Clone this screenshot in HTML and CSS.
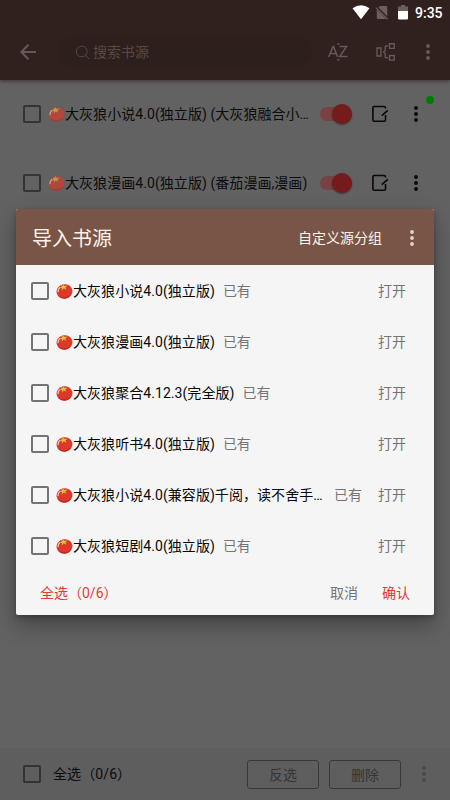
FILE: index.html
```html
<!DOCTYPE html>
<html lang="zh-CN">
<head>
<meta charset="utf-8">
<title>导入书源</title>
<link rel="stylesheet" href="styles.css">
</head>
<body>
<svg width="0" height="0" class="defs">
  <defs>
    <symbol id="tomato" viewBox="0 0 17 16">
      <ellipse cx="8.5" cy="8.4" rx="8" ry="7.2" fill="#dc392b" transform="rotate(-12 8.5 8.4)"/>
      <path d="M1.500 11C4 15 11 16 15.500 10.500C14 14.500 11 15.800 8 15.600C4.500 15.400 2.300 13.500 1.500 11Z" fill="#c12820"/>
      <path d="M2 8.500C2.200 6.500 2.800 5.500 3.600 4.800" stroke="#ffc4b0" stroke-width="1.300" fill="none" stroke-linecap="round"/>
      <path d="M7.800 .8L8.300 3L11.800 2.600L9.400 4.300L10.300 6.800L7.800 5.300L5.800 7.500L5.900 5.100L3.200 4.900L5.900 3.500L5.100 1.900L7.100 2.700Z" fill="#d6c647"/>
    </symbol>
    <symbol id="edit" viewBox="0 0 18 18">
      <path d="M14.500 3.500V2.700Q14.500 1.500 13.200 1.500H3.200Q1.900 1.500 1.900 2.800V14.900Q1.900 16.200 3.200 16.200H13.200Q14.500 16.200 14.500 14.900V10M10.800 10.600L16.800 5.400" fill="none" stroke="#080808" stroke-width="1.600"/>
    </symbol>
    <symbol id="dots" viewBox="0 0 4 16">
      <circle cx="2" cy="2" r="1.950"/><circle cx="2" cy="8" r="1.950"/><circle cx="2" cy="14" r="1.950"/>
    </symbol>
  </defs>
</svg>
<div class="screen">
  <header class="header">
    <div class="status">
      <svg class="wifi" width="18" height="15" viewBox="0 0 18 15"><path d="M.5 3.200Q9-2.800 17.500 3.200L9 14.300Z" fill="#fff"/></svg>
      <svg class="sim" width="14" height="15" viewBox="0 0 14 15"><path d="M5 1H11Q12.300 1 12.300 2.300V14H3.500Q1.800 14 1.800 12.500V4Z" fill="#6b5f5d"/><path d="M.5 1.500L13 14" stroke="#30211e" stroke-width="2.600"/><path d="M.8 2.600L12.600 14.200" stroke="#6b5f5d" stroke-width="1.200"/></svg>
      <svg class="battery" width="10" height="15" viewBox="0 0 10 15"><path d="M3 0H7V1.500H10V7H0V1.500H3Z" fill="#6b5f5d"/><path d="M0 6H10V13.500Q10 14.500 9 14.500H1Q0 14.500 0 13.500Z" fill="#fff"/></svg>
      <span class="clock">9:35</span>
    </div>
    <div class="toolbar">
      <svg class="back" width="16" height="16" viewBox="0 0 16 16"><path d="M16 8H1.500M8.500 .8L1.300 8L8.500 15.200" fill="none" stroke="#655a57" stroke-width="2"/></svg>
      <div class="search">
        <svg width="15" height="15" viewBox="0 0 15 15"><circle cx="6.700" cy="6.500" r="5.400" fill="none" stroke="#574946" stroke-width="1"/><path d="M10.600 10.400L14 14" stroke="#574946" stroke-width="1"/></svg>
        <span>搜索书源</span>
      </div>
      <svg class="sort" width="20" height="20" viewBox="0 0 20 20"><path d="M.7 15L5 4.500H5.500L9.700 15M2.200 11.500H8.200M11.500 4.600H18.500L11.700 14.500H19.700" fill="none" stroke="#655a57" stroke-width="1.500"/><path d="M8.500 2.600L10.300 .7L12.100 2.600ZM8.500 17.200L10.300 19.100L12.100 17.200Z" fill="#655a57"/></svg>
      <svg class="group" width="20" height="20" viewBox="0 0 20 20"><path d="M1 6H5V14H1ZM13.500 1.800H18.200V6.400H13.500ZM13.500 13.500H18.200V18.100H13.500ZM11.800 4H10Q9.200 4 9.200 5V8.500L7.500 10L9.200 11.500V14.800Q9.200 15.800 10 15.800H11.800" fill="none" stroke="#655a57" stroke-width="1.400"/></svg>
      <svg class="dots head-dots"><use href="#dots"/></svg>
    </div>
  </header>

  <main class="sources">
    <div class="source">
      <i class="check"></i><svg class="tomato"><use href="#tomato"/></svg>
      <span class="name">大灰狼小说4.0(独立版) (大灰狼融合小…</span>
      <i class="switch"></i><svg class="edit"><use href="#edit"/></svg>
      <span class="more"><svg class="dots"><use href="#dots"/></svg><i class="badge"></i></span>
    </div>
    <div class="source">
      <i class="check"></i><svg class="tomato"><use href="#tomato"/></svg>
      <span class="name">大灰狼漫画4.0(独立版) (番茄漫画,漫画)</span>
      <i class="switch"></i><svg class="edit"><use href="#edit"/></svg>
      <span class="more"><svg class="dots"><use href="#dots"/></svg></span>
    </div>
  </main>

  <footer class="footer">
    <i class="check"></i><span class="all">全选（0/6）</span>
    <span class="btn">反选</span><span class="btn">删除</span>
    <svg class="dots foot-dots"><use href="#dots"/></svg>
  </footer>

  <section class="dialog">
    <div class="dialog-head">
      <h1>导入书源</h1><span class="custom">自定义源分组</span>
      <svg class="dots"><use href="#dots"/></svg>
    </div>
    <div class="item"><i class="check"></i><svg class="tomato"><use href="#tomato"/></svg><span class="name">大灰狼小说4.0(独立版)</span><span class="have">已有</span><span class="open">打开</span></div>
    <div class="item"><i class="check"></i><svg class="tomato"><use href="#tomato"/></svg><span class="name">大灰狼漫画4.0(独立版)</span><span class="have">已有</span><span class="open">打开</span></div>
    <div class="item"><i class="check"></i><svg class="tomato"><use href="#tomato"/></svg><span class="name">大灰狼聚合4.12.3(完全版)</span><span class="have">已有</span><span class="open">打开</span></div>
    <div class="item"><i class="check"></i><svg class="tomato"><use href="#tomato"/></svg><span class="name">大灰狼听书4.0(独立版)</span><span class="have">已有</span><span class="open">打开</span></div>
    <div class="item"><i class="check"></i><svg class="tomato"><use href="#tomato"/></svg><span class="name">大灰狼小说4.0(兼容版)千阅，读不舍手…</span><span class="have far">已有</span><span class="open">打开</span></div>
    <div class="item"><i class="check"></i><svg class="tomato"><use href="#tomato"/></svg><span class="name">大灰狼短剧4.0(独立版)</span><span class="have">已有</span><span class="open">打开</span></div>
    <div class="actions"><span class="red">全选（0/6）</span><span class="cancel">取消</span><span class="red">确认</span></div>
  </section>
</div>
</body>
</html>
```

FILE: styles.css
```css
* { box-sizing: border-box; }
body {
  margin: 0;
  font: 14px/20px Roboto, "Noto Sans CJK SC", sans-serif;
}
.defs { position: absolute; }
svg { flex: none; display: block; }
.screen {
  position: relative;
  width: 450px;
  height: 800px;
  overflow: hidden;
  display: flex;
  flex-direction: column;
  background: #626262;
}
.header {
  height: 80px;
  flex: none;
  background: #30211e;
  box-shadow: 0 1px 4px rgba(30, 15, 12, .6);
}
.status {
  height: 24px;
  display: flex;
  align-items: center;
  padding-left: 352px;
}
.sim { margin-left: 5px; }
.battery { margin-left: 9px; }
.clock {
  margin-left: 7px;
  padding-top: 1px;
  color: #fff;
  font-size: 14px;
  font-weight: 500;
}
.toolbar {
  height: 56px;
  display: flex;
  align-items: center;
  padding-left: 20px;
}
.search {
  width: 252px;
  height: 30px;
  margin-left: 24px;
  padding-left: 15px;
  border-radius: 15px;
  background: #2d1f1c;
  color: #574946;
  display: flex;
  align-items: center;
  gap: 3px;
}
.sort { margin-left: 16px; }
.group { margin-left: 28px; }
.dots { width: 4px; height: 16px; fill: #080808; }
.head-dots { margin-left: 30px; fill: #655a57; }
.sources { flex: 1; }
.source {
  height: 68.5px;
  display: flex;
  align-items: center;
  padding-left: 23px;
}
.check {
  flex: none;
  width: 18px;
  height: 18px;
  border: 2px solid #343434;
  border-radius: 2px;
}
.tomato { width: 17px; height: 16px; margin-left: 7px; }
.source .tomato { opacity: .67; }
.name { white-space: nowrap; letter-spacing: .06px; }
.source .name { width: 255px; color: #0c0c0c; }
.switch {
  flex: none;
  width: 32px;
  height: 14px;
  border-radius: 7px;
  background: #784143;
  display: flex;
  align-items: center;
  justify-content: flex-end;
}
.switch::after {
  content: "";
  flex: none;
  width: 20px;
  height: 20px;
  border-radius: 50%;
  background: #761b1b;
  box-shadow: 0 1px 2px rgba(0, 0, 0, .4);
}
.edit { width: 18px; height: 18px; margin-left: 19px; }
.more { position: relative; margin-left: 25px; }
.badge {
  position: absolute;
  left: 12px;
  top: -10px;
  width: 8px;
  height: 8px;
  border-radius: 50%;
  background: #007d00;
}
.footer {
  height: 52px;
  flex: none;
  display: flex;
  align-items: center;
  padding-left: 23px;
  background: #5e5e5e;
}
.all { width: 194px; margin-left: 12px; color: #0c0c0c; letter-spacing: .1px; }
.btn {
  width: 72px;
  height: 29px;
  margin-right: 10px;
  border: 1px solid #393939;
  border-radius: 3px;
  text-align: center;
  line-height: 28px;
  color: #343434;
}
.foot-dots { margin-left: 11px; fill: #4a4a4a; }
.dialog {
  position: absolute;
  left: 16px;
  top: 209px;
  width: 418px;
  height: 406px;
  border-radius: 2px;
  overflow: hidden;
  background: #f5f5f5;
  box-shadow: 0 10px 22px rgba(0, 0, 0, .32), 0 2px 5px rgba(0, 0, 0, .25);
}
.dialog-head {
  height: 56px;
  display: flex;
  align-items: center;
  padding: 1px 20px 0 16px;
  background: #795548;
  color: #fff3e6;
}
.dialog-head h1 { flex: 1; margin: 0; padding-top: 3px; font-size: 20px; font-weight: 400; }
.custom { margin-right: 28px; }
.dialog-head .dots { fill: #dfd0c8; }
.item {
  height: 51px;
  display: flex;
  align-items: center;
  padding: 0 28px 0 15px;
  color: #080808;
}
.item .check { border-color: #737373; }
.have { margin-left: 8px; color: #757575; }
.have.far { margin-left: auto; margin-right: 16px; }
.open { margin-left: auto; color: #757575; }
.far + .open { margin-left: 0; }
.actions { height: 43px; display: flex; align-items: center; padding: 0 24px; }
.red { color: #e53935; }
.cancel { margin-left: auto; margin-right: 24px; color: #757575; }
```
